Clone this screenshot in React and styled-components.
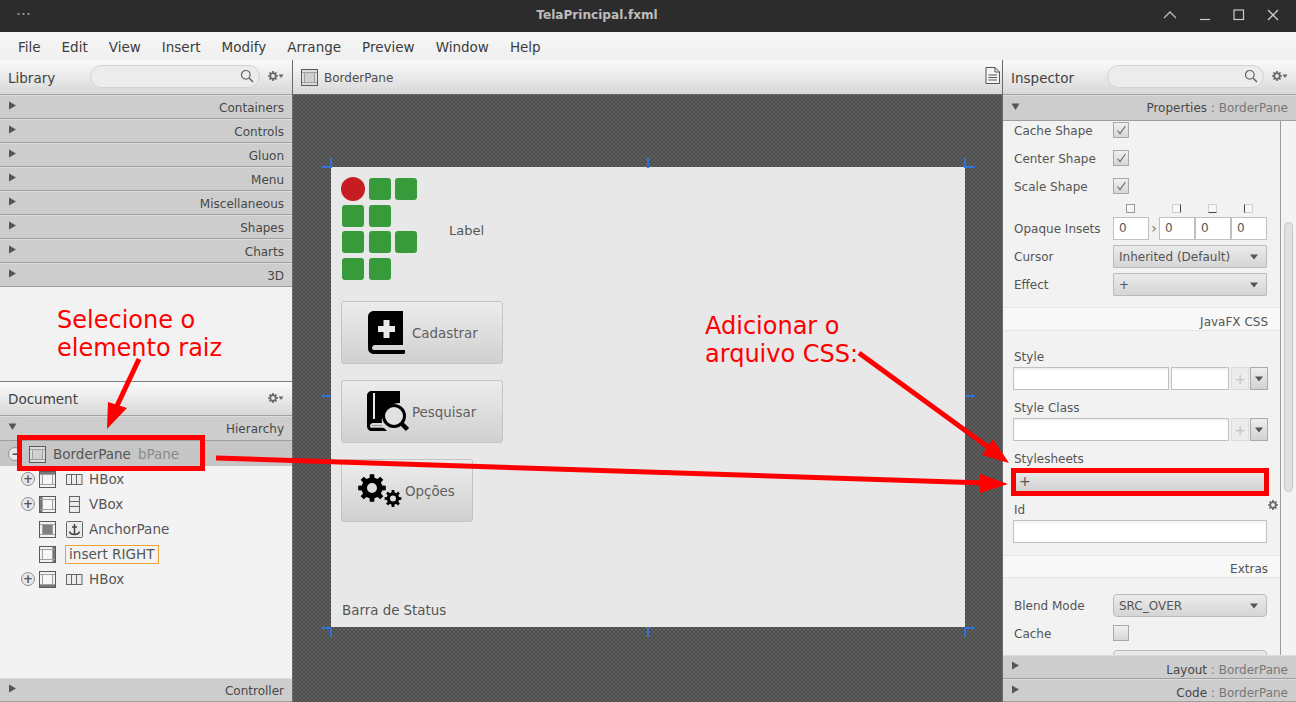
import React from 'react';
import styled, { createGlobalStyle } from 'styled-components';

const Global = createGlobalStyle`
  html, body { margin: 0; padding: 0; width: 1296px; height: 702px; overflow: hidden; background: #f3f3f3; }
  * { box-sizing: border-box; }
  body { font-family: "DejaVu Sans", sans-serif; font-size: 12px; color: #4a4a4a; }
`;

const Window = styled.div`
  position: relative; width: 1296px; height: 702px; display: flex; flex-direction: column; overflow: hidden;
`;
const TitleBar = styled.div`
  height: 32px; background: #2c2c2c; display: flex; align-items: center; justify-content: space-between; padding: 0 17px 2px 16px; position: relative;
`;
const Dots = styled.div`
  width: 14px; height: 2px; background-image: radial-gradient(circle, #9a9a9a 1px, transparent 1.2px); background-size: 5px 2px; margin-top: -3px;
`;
const Title = styled.div`
  position: absolute; left: 0; width: 1194px; text-align: center; font-weight: 700; font-size: 12.1px; color: #bdbdbd; top: 8px;
`;
const WinButtons = styled.div`
  display: flex; align-items: center; gap: 22px; color: #cfcfcf;
`;
const MenuBar = styled.div`
  height: 28px; display: flex; align-items: center; padding: 2px 0 0 18px; gap: 21px; font-size: 13.5px; color: #3c3c3c;
  background: linear-gradient(#f7f7f7, #efefef);
`;
const Main = styled.div`
  flex: 1; display: flex; min-height: 0;
`;
const LeftCol = styled.div`
  width: 293px; display: flex; flex-direction: column; border-right: 1px solid #6a6a6a; background: #f2f2f2;
`;
const CenterCol = styled.div`
  width: 710px; display: flex; flex-direction: column; border-right: 1px solid #6a6a6a;
`;
const RightCol = styled.div`
  flex: 1; display: flex; flex-direction: column; min-width: 0; background: #f2f2f2;
`;
const PanelHead = styled.div`
  height: ${p => p.$h || 35}px; flex: none; display: flex; align-items: center; padding: 0 8px;
  background: linear-gradient(#fafafa 0%, #e6e6e6 60%, #d8d8d8 100%);
  border-bottom: 1px solid #a2a2a2; font-size: 13.5px; color: #424242;
`;
const HeadTitle = styled.span` flex: 1; margin-top: ${p => p.$drop ? 2 : 0}px; `;
const Search = styled.div`
  width: ${p => p.$w}px; height: 23px; border: 1px solid #d2d2d2; border-radius: 12px; background: #ececec; display: flex; align-items: center; justify-content: flex-end; padding-right: 5px; margin: -2px 8px 0 0;
`;
const GearWrap = styled.span`
  display: inline-flex; margin-top: -2px; width: 16px;
`;
const Bar = styled.div`
  height: ${p => p.$h || 24}px; flex: none; display: flex; align-items: center; justify-content: space-between;
  padding: ${p => p.$pt || 0}px 8px 0 8px; background: #cdcdcd; border-bottom: 1px solid #9f9f9f; border-top: 1px solid #dcdcdc; font-size: 12px; color: #474747;
`;
const Muted = styled.span` color: #777; `;
const Caret = styled.svg` width: 9px; height: 9px; margin-top: ${p => p.$up}px; flex: none; `;
const Spacer = styled.div` flex: none; height: ${p => p.$h || 0}px; `;
const DocHead = styled(PanelHead)` border-top: 1px solid #7f7f7f; `;
const Tree = styled.div`
  flex: 1; display: flex; flex-direction: column; background: #f3f3f3;
`;
const TreeRow = styled.div`
  height: 25px; flex: none; display: flex; align-items: center; padding: 1px 0 0 ${p => p.$indent}px; font-size: 13.5px; color: #555;
  background: ${p => p.$sel ? '#c6c6c6' : 'transparent'};
`;
const Toggle = styled.span`
  width: 14px; height: 14px; flex: none; border-radius: 50%; border: 1.5px solid #8f8f8f; margin-right: ${p => p.$mr || 4}px; background: #e8e8e8;
  display: flex; align-items: center; justify-content: center; font-size: 12px; line-height: 1; color: #555; font-weight: 700;
`;
const NoToggle = styled.span` width: 18px; flex: none; `;
const TreeIcon = styled.span` display: inline-flex; width: 18px; flex: none; margin-right: ${p => p.$mr || 8}px; `;
const TypeIcon = styled.span` display: inline-flex; width: 18px; flex: none; margin-right: 6px; justify-content: center; `;
const Secondary = styled.span` color: #8a8a8a; margin-left: 7px; `;
const InsertBox = styled.span`
  border: 1px solid #f0a030; padding: 0 3px; height: 19px; line-height: 17px; font-size: 13.6px; color: #555;
`;

const Crumb = styled.div`
  height: 35px; flex: none; display: flex; align-items: center; padding: 0 8px; gap: 6px; font-size: 12px; color: #4c4c4c;
  background: linear-gradient(#fafafa 0%, #e6e6e6 60%, #d8d8d8 100%); border-bottom: 1px solid #6a6a6a;
`;
const CrumbText = styled.span` margin-top: 2px; `;
const DocIcon = styled.svg` margin: -4px -6px 0 auto; `;
const Canvas = styled.div`
  flex: 1; padding: 72px 37px 0 38px;
  background-color: #555;
  background-image: repeating-conic-gradient(#4b4b4b 0 25%, #606060 0 50%);
  background-size: 4px 4px;
`;
const Stage = styled.div`
  position: relative; width: 634px; height: 460px; background: #e8e8e8; padding: 11px 11px 0 10px; display: flex; flex-direction: column; align-items: flex-start;
`;
const Handle = styled.div`
  position: absolute; background: #2f72d8;
  ${p => p.$h ? `height: 2px; width: 10px;` : `width: 2px; height: 10px;`}
  left: ${p => p.$x}px; top: ${p => p.$y}px;
`;
const Brand = styled.div`
  display: flex; align-items: center; gap: 31px; height: 102px; margin-bottom: 21px; font-size: 13px; color: #555;
`;
const BrandLabel = styled.span` padding-top: 2px; `;
const LogoGrid = styled.div`
  display: grid; grid-template-columns: repeat(3, 22px); grid-auto-rows: 22px; gap: 4.5px; width: 76px; margin-left: 1px;
`;
const Sq = styled.div`
  background: #389b3b; border-radius: 3px;
`;
const Dot = styled.div`
  background: #c61d23; border-radius: 50%; margin: -1px;
`;
const BigBtn = styled.div`
  width: ${p => p.$w}px; height: 63px; margin-bottom: 16px; border: 1px solid #c4c4c4; border-radius: 3px; display: flex; align-items: center;
  background: linear-gradient(#ececec, #d0d0d0); font-size: 13.4px; color: #606060; padding-left: ${p => p.$pad}px; gap: ${p => p.$gap}px;
`;
const BtnText = styled.span` margin-top: 1px; `;
const Status = styled.div`
  margin-top: auto; height: 37px; font-size: 13.4px; color: #555; padding: 13px 0 0 1px;
`;

const Scroll = styled.div`
  height: 534px; flex: none; display: flex; overflow: hidden;
`;
const Props = styled.div`
  width: 278px; flex: none; border-right: 1px solid #9c9c9c; height: 100%; overflow: hidden; display: flex; flex-direction: column;
`;
const Track = styled.div`
  flex: 1; display: flex; padding: 101px 0 0 3px; background: #f3f3f3;
`;
const Thumb = styled.div`
  width: 9px; height: 270px; border-radius: 5px; background: #e0e0e0; border: 1px solid #c8c8c8;
`;
const Row = styled.div`
  height: 28px; flex: none; display: flex; align-items: ${p => p.$top ? 'flex-start' : 'center'}; padding-left: 11px; margin-top: ${p => p.$mt || 0}px; font-size: 12px; color: #555;
`;
const RowLabel = styled.span` width: 99px; flex: none; padding-top: 2px; `;
const Check = styled.span`
  width: 16px; height: 16px; flex: none; border: 1px solid #a8a8a8; background: linear-gradient(#f0f0f0, #d6d6d6); display: flex; align-items: center; justify-content: center;
`;
const HintRow = styled.div`
  height: 14px; flex: none; display: flex; padding-left: 123px;
`;
const HintBox = styled.span`
  width: 9px; height: 9px; margin-top: 4px; margin-right: ${p => p.$mr || 0}px; background: #f6f6f6; border: 1px solid #d0d0d0;
  ${p => p.$side ? `border-${p.$side}-color: #444;` : `border-color: #999;`}
`;
const Inputs = styled.div` display: flex; align-items: center; `;
const NumBox = styled.span`
  width: 36px; height: 23px; flex: none; background: #fff; border: 1px solid #c0c0c0; padding-left: 5px; line-height: 21px; font-size: 12px; color: #555;
`;
const Sep = styled.span` width: 10px; flex: none; font-size: 14px; color: #777; text-align: center; `;
const Select = styled.div`
  width: 154px; height: 23px; flex: none; border: 1px solid #bbb; border-radius: ${p => p.$round ? 4 : 1}px; background: linear-gradient(#ebebeb, #d5d5d5); display: flex; align-items: center; justify-content: space-between; padding: 1px 7px 0 5px; font-size: 12px; color: #555;
`;
const SectionHead = styled.div`
  height: ${p => p.$h}px; flex: none; margin-top: ${p => p.$mt}px; background: #f8f8f8; border-top: 1px solid #e5e5e5; border-bottom: 1px solid #e5e5e5; display: flex; align-items: center; justify-content: flex-end; padding: 5px 12px 0 0; font-size: 12px; color: #555;
`;
const Label = styled.div`
  height: 15px; flex: none; padding-left: 11px; margin-top: ${p => p.$mt}px; font-size: 12px; line-height: 17px; color: #555;
`;
const Field = styled.div`
  display: flex; gap: 2px; padding-left: 10px; margin-top: 3px; flex: none; height: 23px;
`;
const Input = styled.div`
  width: ${p => p.$w}px; height: 23px; background: #fff; border: 1px solid #c0c0c0; box-shadow: inset 0 2px 2px #f2f2f2; flex: none;
`;
const AddBtn = styled.div`
  width: 18px; height: 23px; border: 1px solid #dcdcdc; background: #ececec; color: #c4c4c4; text-align: center; font-size: 14px; line-height: 22px;
`;
const DropBtn = styled.div`
  width: 18px; height: 23px; margin-left: -1px; border: 1px solid #aaa; background: linear-gradient(#eee, #d2d2d2); display: flex; align-items: center; justify-content: center;
`;
const WideBtn = styled.div`
  width: 250px; height: 22px; margin: 4px 0 0 13px; flex: none; background: linear-gradient(#ededed, #cfcfcf); font-size: 14px; line-height: 23px; padding-left: 3px; color: #555;
`;
const TinyGear = styled.div`
  height: 0; flex: none; position: relative;
`;
const TinyGearIcon = styled.span`
  position: absolute; right: 2px; top: 8px; display: inline-flex;
`;
const RedBox = styled.div`
  position: absolute; left: ${p => p.$x}px; top: ${p => p.$y}px; width: ${p => p.$w}px; height: ${p => p.$h}px; border: 5px solid #f00; pointer-events: none;
`;
const Note = styled.div`
  position: absolute; left: ${p => p.$x}px; top: ${p => p.$y}px; color: #f00; font-size: 24px; line-height: 28px; white-space: pre; font-family: "DejaVu Sans", sans-serif;
`;
const Overlay = styled.svg`
  position: absolute; left: 0; top: 0; pointer-events: none;
`;

const gearPath = (cx, cy, ro, ri, n, hole) => {
  const pts = [];
  const step = (Math.PI * 2) / n;
  for (let i = 0; i < n; i++) {
    const a = i * step;
    const w = step * 0.2;
    const g = step * 0.3;
    [[ri, a - g], [ro, a - w], [ro, a + w], [ri, a + g]].forEach(([r, t]) => {
      pts.push(`${(cx + r * Math.cos(t)).toFixed(2)} ${(cy + r * Math.sin(t)).toFixed(2)}`);
    });
  }
  const d = `M${pts.join('L')}Z`;
  return `${d}M${cx - hole} ${cy}a${hole} ${hole} 0 1 0 ${hole * 2} 0a${hole} ${hole} 0 1 0 ${-hole * 2} 0Z`;
};

const Tri = ({ down, up = -4, color = '#555' }) => (
  <Caret $up={up} viewBox="0 0 9 9">
    <path d={down ? 'M0.5 1.5H8.5L4.5 8Z' : 'M1 0.5V8.5L8 4.5Z'} fill={color} />
  </Caret>
);
const SmallDown = () => (
  <svg width="10" height="6" viewBox="0 0 10 6"><path d="M1 0.5H9L5 5.5Z" fill="#555" /></svg>
);
const Gear = ({ arrow = true }) => (
  <svg width={arrow ? 16 : 10} height="10" viewBox={arrow ? '0 0 16 10' : '0 0 10 10'}>
    <path d={gearPath(5, 5, 5, 3.7, 8, 1.9)} fill="#666" fillRule="evenodd" />
    {arrow && <path d="M10.5 3.5H15.5L13 7Z" fill="#666" />}
  </svg>
);
const Glass = () => (
  <svg width="14" height="14" viewBox="0 0 14 14" fill="none" stroke="#666" strokeWidth="1.2">
    <circle cx="5.8" cy="5.8" r="4.3" /><path d="M9 9L13 13" strokeWidth="1.6" />
  </svg>
);
const Frame = ({ side, dark }) => {
  const bars = {
    top: <rect x="1" y="1" width="15" height="2.5" fill="#777" />,
    left: <rect x="1" y="1" width="2.5" height="15" fill="#777" />,
    right: <rect x="13.5" y="1" width="2.5" height="15" fill="#777" />,
    bottom: <rect x="1" y="13.5" width="15" height="2.5" fill="#777" />,
  };
  return (
    <svg width="17" height="17" viewBox="0 0 17 17">
      <rect x="0.5" y="0.5" width="16" height="16" fill={dark ? '#dcdcdc' : '#f2f2f2'} stroke="#5a5a5a" />
      {bars[side]}
      <path d="M1 3.5H16M1 13.5H16M3.5 3.5V13.5M13.5 3.5V13.5" stroke="#a0a0a0" fill="none" />
      <rect x="4" y="4" width="9" height="9" fill={side === 'center' ? '#808080' : dark ? '#cfcfcf' : '#f6f6f6'} />
    </svg>
  );
};
const HBoxIcon = () => (
  <svg width="17" height="11" viewBox="0 0 17 11" fill="#ececec" stroke="#666">
    <rect x="0.5" y="0.5" width="5" height="10" /><rect x="5.5" y="0.5" width="5" height="10" /><rect x="10.5" y="0.5" width="5.5" height="10" />
  </svg>
);
const VBoxIcon = () => (
  <svg width="11" height="17" viewBox="0 0 11 17" fill="#ececec" stroke="#666">
    <rect x="0.5" y="0.5" width="10" height="5" /><rect x="0.5" y="5.5" width="10" height="5" /><rect x="0.5" y="10.5" width="10" height="6" />
  </svg>
);
const AnchorIcon = () => (
  <svg width="17" height="17" viewBox="0 0 17 17">
    <rect x="0.5" y="0.5" width="16" height="16" rx="1" fill="#ececec" stroke="#666" />
    <path d="M8.5 3V13M6 6H11M3.5 10.5C4 12.5 6 13.5 8.5 13.5C11 13.5 13 12.5 13.5 10.5" fill="none" stroke="#444" strokeWidth="1.5" />
  </svg>
);
const CheckMark = () => (
  <svg width="11" height="10" viewBox="0 0 11 10"><path d="M1.5 5.5L4 8.5L9.5 1" fill="none" stroke="#666" strokeWidth="1.1" /></svg>
);
const BookPlus = () => (
  <svg width="37" height="43" viewBox="0 0 37 43">
    <path d="M6 0H35V34H7C5 34 4 35.5 4 37C4 38.5 5 39 7 39H37V41.5C37 42.5 36 43 35 43H6C2.5 43 0 40.5 0 37V6C0 2.5 2.5 0 6 0Z" fill="#000" />
    <path d="M15.5 9H21.5V15H27V21H21.5V27H15.5V21H10V15H15.5Z" fill="#eaeaea" />
  </svg>
);
const BookSearch = () => (
  <svg width="42" height="42" viewBox="0 0 42 42">
    <path d="M5 0H33V12C24 12 16 18 15 27C14.5 29 15 31 15 32H6C4 32 3 33.5 3 35C3 36.5 4 37 6 37H17L20 40H5C2 40 0 38 0 35V5C0 2 2 0 5 0Z" fill="#000" />
    <path d="M7 2V28" stroke="#e8e8e8" strokeWidth="2" />
    <circle cx="27" cy="25" r="10.5" fill="#e2e2e2" stroke="#000" strokeWidth="3" />
    <path d="M34.5 32.5L40.5 38.5" stroke="#000" strokeWidth="4.5" />
    <path d="M5 34.5H15M5 36.5H16" stroke="#999" strokeWidth="1" />
  </svg>
);
const Cogs = () => (
  <svg width="44" height="33" viewBox="0 0 44 33">
    <path d={gearPath(14, 14, 14, 10.5, 8, 5)} fill="#000" fillRule="evenodd" />
    <path d={gearPath(35, 24.5, 8.5, 6.3, 8, 3)} fill="#000" fillRule="evenodd" />
  </svg>
);

const libs = ['Containers', 'Controls', 'Gluon', 'Menu', 'Miscellaneous', 'Shapes', 'Charts', '3D'];

export default function App() {
  return (
    <Window>
      <Global />
      <TitleBar>
        <Dots />
        <Title>TelaPrincipal.fxml</Title>
        <WinButtons>
          <svg width="14" height="8" viewBox="0 0 14 8" fill="none" stroke="#bbb" strokeWidth="1.3"><path d="M1 7L7 1L13 7" /></svg>
          <svg width="12" height="12" viewBox="0 0 12 12" fill="none" stroke="#ccc" strokeWidth="1.2"><path d="M1 10.5H11" /></svg>
          <svg width="12" height="12" viewBox="0 0 12 12" fill="none" stroke="#ccc" strokeWidth="1.2"><rect x="1" y="1" width="9.5" height="9.5" /></svg>
          <svg width="12" height="12" viewBox="0 0 12 12" fill="none" stroke="#ccc" strokeWidth="1.3"><path d="M1 1L11 11M11 1L1 11" /></svg>
        </WinButtons>
      </TitleBar>
      <MenuBar>
        {['File', 'Edit', 'View', 'Insert', 'Modify', 'Arrange', 'Preview', 'Window', 'Help'].map(m => <span key={m}>{m}</span>)}
      </MenuBar>
      <Main>
        <LeftCol>
          <PanelHead>
            <HeadTitle $drop>Library</HeadTitle>
            <Search $w={170}><Glass /></Search>
            <GearWrap><Gear /></GearWrap>
          </PanelHead>
          {libs.map(l => <Bar key={l} $pt={1}><Tri up={-5} />{l}</Bar>)}
          <Spacer $h={94} />
          <DocHead>
            <HeadTitle>Document</HeadTitle>
            <GearWrap><Gear /></GearWrap>
          </DocHead>
          <Bar $h={25}><Tri down />Hierarchy</Bar>
          <Tree>
            <TreeRow $indent={8} $sel>
              <Toggle $mr={7}>–</Toggle>
              <TreeIcon $mr={6}><Frame dark /></TreeIcon>
              BorderPane<Secondary>bPane</Secondary>
            </TreeRow>
            <TreeRow $indent={21}><Toggle>+</Toggle><TreeIcon><Frame side="top" /></TreeIcon><TypeIcon><HBoxIcon /></TypeIcon>HBox</TreeRow>
            <TreeRow $indent={21}><Toggle>+</Toggle><TreeIcon><Frame side="left" /></TreeIcon><TypeIcon><VBoxIcon /></TypeIcon>VBox</TreeRow>
            <TreeRow $indent={21}><NoToggle /><TreeIcon><Frame side="center" /></TreeIcon><TypeIcon><AnchorIcon /></TypeIcon>AnchorPane</TreeRow>
            <TreeRow $indent={21}><NoToggle /><TreeIcon><Frame side="right" /></TreeIcon><InsertBox>insert RIGHT</InsertBox></TreeRow>
            <TreeRow $indent={21}><Toggle>+</Toggle><TreeIcon><Frame side="bottom" /></TreeIcon><TypeIcon><HBoxIcon /></TypeIcon>HBox</TreeRow>
          </Tree>
          <Bar $pt={2}><Tri up={-6} />Controller</Bar>
        </LeftCol>
        <CenterCol>
          <Crumb>
            <Frame dark />
            <CrumbText>BorderPane</CrumbText>
            <DocIcon width="15" height="17" viewBox="0 0 15 17" fill="#f4f4f4" stroke="#555">
              <path d="M1 0.5H10L14.5 5V16.5H1Z" /><path d="M10 0.5V5H14.5M3.5 8H12M3.5 10.5H12M3.5 13H12" fill="none" />
            </DocIcon>
          </Crumb>
          <Canvas>
            <Stage>
              <Handle $h $x={-10} $y={-1} /><Handle $x={-1} $y={-9} />
              <Handle $h $x={634} $y={-1} /><Handle $x={633} $y={-9} />
              <Handle $h $x={-10} $y={460} /><Handle $x={-1} $y={460} />
              <Handle $h $x={634} $y={460} /><Handle $x={633} $y={460} />
              <Handle $x={316} $y={-9} /><Handle $x={316} $y={460} />
              <Handle $h $x={-10} $y={228} /><Handle $h $x={634} $y={228} />
              <Brand>
                <LogoGrid>
                  <Dot /><Sq /><Sq />
                  <Sq /><Sq /><span />
                  <Sq /><Sq /><Sq />
                  <Sq /><Sq /><span />
                </LogoGrid>
                <BrandLabel>Label</BrandLabel>
              </Brand>
              <BigBtn $w={162} $pad={26} $gap={7}><BookPlus /><BtnText>Cadastrar</BtnText></BigBtn>
              <BigBtn $w={162} $pad={25} $gap={3}><BookSearch /><BtnText>Pesquisar</BtnText></BigBtn>
              <BigBtn $w={132} $pad={16} $gap={3}><Cogs /><BtnText>Opções</BtnText></BigBtn>
              <Status>Barra de Status</Status>
            </Stage>
          </Canvas>
        </CenterCol>
        <RightCol>
          <PanelHead>
            <HeadTitle $drop>Inspector</HeadTitle>
            <Search $w={157}><Glass /></Search>
            <GearWrap><Gear /></GearWrap>
          </PanelHead>
          <Bar $h={26}><Tri down /><span>Properties <Muted>: BorderPane</Muted></span></Bar>
          <Scroll>
            <Props>
              <Row $mt={-5}><RowLabel>Cache Shape</RowLabel><Check><CheckMark /></Check></Row>
              <Row><RowLabel>Center Shape</RowLabel><Check><CheckMark /></Check></Row>
              <Row><RowLabel>Scale Shape</RowLabel><Check><CheckMark /></Check></Row>
              <HintRow>
                <HintBox $mr={37} /><HintBox $side="right" $mr={27} /><HintBox $side="bottom" $mr={27} /><HintBox $side="left" />
              </HintRow>
              <Row><RowLabel>Opaque Insets</RowLabel>
                <Inputs><NumBox>0</NumBox><Sep>›</Sep><NumBox>0</NumBox><NumBox>0</NumBox><NumBox>0</NumBox></Inputs>
              </Row>
              <Row><RowLabel>Cursor</RowLabel><Select>Inherited (Default)<SmallDown /></Select></Row>
              <Row><RowLabel>Effect</RowLabel><Select>+<SmallDown /></Select></Row>
              <SectionHead $mt={9} $h={24}>JavaFX CSS</SectionHead>
              <Label $mt={18}>Style</Label>
              <Field><Input $w={156} /><Input $w={58} /><AddBtn>+</AddBtn><DropBtn><SmallDown /></DropBtn></Field>
              <Label $mt={10}>Style Class</Label>
              <Field><Input $w={216} /><AddBtn>+</AddBtn><DropBtn><SmallDown /></DropBtn></Field>
              <Label $mt={10}>Stylesheets</Label>
              <WideBtn>+</WideBtn>
              <TinyGear><TinyGearIcon><Gear arrow={false} /></TinyGearIcon></TinyGear>
              <Label $mt={10}>Id</Label>
              <Field><Input $w={254} /></Field>
              <SectionHead $mt={12} $h={23}>Extras</SectionHead>
              <Row $mt={13}><RowLabel>Blend Mode</RowLabel><Select $round>SRC_OVER<SmallDown /></Select></Row>
              <Row><RowLabel>Cache</RowLabel><Check /></Row>
              <Row $top $mt={3}><RowLabel /><Select $round /></Row>
            </Props>
            <Track><Thumb /></Track>
          </Scroll>
          <Bar $pt={5}><Tri up={-8} /><span>Layout <Muted>: BorderPane</Muted></span></Bar>
          <Bar $h={23} $pt={5}><Tri up={-8} /><span>Code <Muted>: BorderPane</Muted></span></Bar>
        </RightCol>
      </Main>

      <RedBox $x={17} $y={435} $w={188} $h={36} />
      <RedBox $x={1011} $y={468} $w={258} $h={28} />
      <Note $x={57} $y={306}>{'Selecione o\nelemento raiz'}</Note>
      <Note $x={705} $y={312}>{'Adicionar o\narquivo CSS:'}</Note>
      <Overlay width="1296" height="702" viewBox="0 0 1296 702">
        <g stroke="#f00" strokeWidth="5" fill="#f00">
          <path d="M139 359L116 408" fill="none" />
          <path d="M216 458L985 483" fill="none" />
          <path d="M859 353L988 447" fill="none" />
        </g>
        <path d="M107 429L108 402L127 408Z" fill="#f00" />
        <path d="M1008 484L980 474V493Z" fill="#f00" />
        <path d="M1009 463L993 439L982 455Z" fill="#f00" />
      </Overlay>
    </Window>
  );
}
